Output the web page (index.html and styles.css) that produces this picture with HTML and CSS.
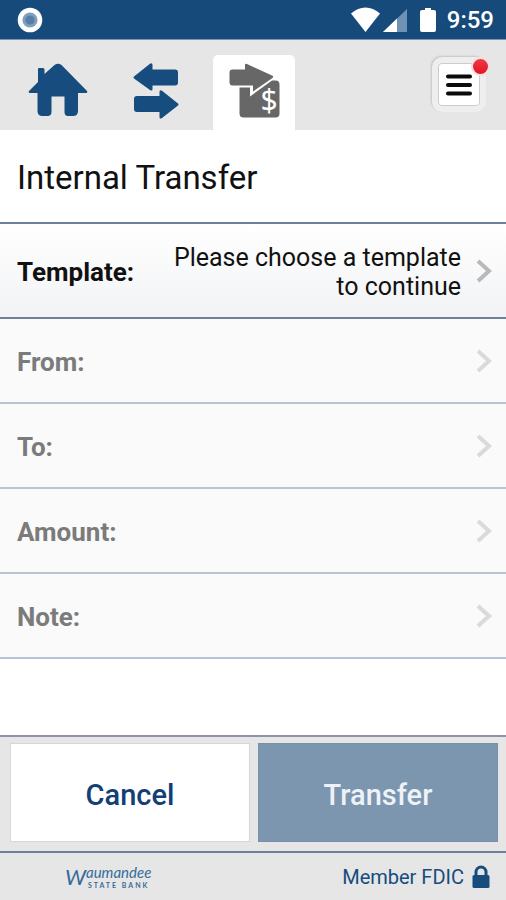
FILE: index.html
```html
<!DOCTYPE html>
<html lang="en">
<head>
<meta charset="utf-8">
<meta name="viewport" content="width=device-width, initial-scale=1">
<title>Internal Transfer</title>
<link rel="stylesheet" href="styles.css">
</head>
<body>
<div class="status">
  <svg class="status-dot" width="26" height="26" viewBox="0 0 26 26" aria-hidden="true"><circle cx="13" cy="13" r="12.3" fill="#fff"/><circle cx="13" cy="13" r="7.6" fill="#7f9fbf"/><circle cx="13" cy="13" r="4.6" fill="#557fa8"/></svg>
  <div class="status-icons">
    <svg width="86" height="26" viewBox="0 0 86 26" aria-hidden="true">
      <path d="M1 6.5C10-1.500 21-1.500 30 6.500L15.500 25Z" fill="#fff"/>
      <path d="M57 2V25H33Z" fill="#6f91b3"/>
      <path d="M47 11.500V25H33Z" fill="#fff"/>
      <path d="M72 3h3V1h6v2h3q2 0 2 2v18q0 2-2 2H72q-2 0-2-2V5q0-2 2-2Z" fill="#fff"/>
    </svg>
    <span>9:59</span>
  </div>
</div>
<nav class="nav">
  <a class="tab" href="#home" aria-label="Home">
    <svg width="60" height="54" viewBox="0 0 60 54" aria-hidden="true"><path d="M11 5h4q1.500 0 1.500 1.500V11L26.500 2q3.500-2.500 7 0L59 28q1 2-1 2h-8v18q0 5-5 5h-5q-3.500 0-3.500-4V33.500h-13V49q0 4-4 4h-5q-5 0-5-5V30H2q-2 0-1-2l9-9V6q0-1 1-1Z" fill="#164c7e"/></svg>
  </a>
  <a class="tab" href="#transfers" aria-label="Transfers">
    <svg width="46" height="56" viewBox="0 0 46 56" aria-hidden="true"><path d="M1 13.500 17 .8Q19.500-.5 19.500 2V6.500H42q3 0 3 3v10q0 3-3 3H19.500V26q0 2.500-2.500 1L1 15.500q-1-1 0-2Z" fill="#164c7e"/><path d="M45 40.500 29 27.800q-2.500-1.300-2.500 1.200V33H4q-3 0-3 3v10q0 3 3 3H26.500v5q0 2.500 2.500 1L45 42.500q1-1 0-2Z" fill="#164c7e"/></svg>
  </a>
  <a class="tab tab-active" href="#internal" aria-label="Internal transfer" aria-current="page">
    <svg width="52" height="56" viewBox="0 0 52 56" aria-hidden="true"><path d="M11.500 24.500H22V33.500L44 17.500H47.500q4 0 4 4V50.500q0 4-4 4H15.500q-4 0-4-4Z" fill="#676767"/><path d="M4.500 6.500H17V2q0-2 2-1L44 12.500q2 1 .5 2.500L25 28.500V22.500H4.500q-3 0-3-3v-10q0-3 3-3Z" fill="#676767"/><text class="coin" x="41" y="48" text-anchor="middle">$</text></svg>
  </a>
  <button class="menu" aria-label="Menu">
    <svg width="28" height="24" viewBox="0 0 28 24" stroke="#0b0b0b" stroke-width="4" stroke-linecap="round" aria-hidden="true"><path d="M3 3.500h22M3 12h22M3 20.500h22"/></svg>
    <span class="badge"></span>
  </button>
</nav>
<main>
  <h1>Internal Transfer</h1>
  <button class="row row-active"><strong>Template:</strong><span class="value">Please choose a template to continue</span><svg class="chevron" width="16" height="24" viewBox="0 0 16 24" aria-hidden="true"><path d="M2 2 13 12 2 22"/></svg></button>
  <button class="row" disabled><strong>From:</strong><svg class="chevron" width="16" height="24" viewBox="0 0 16 24" aria-hidden="true"><path d="M2 2 13 12 2 22"/></svg></button>
  <button class="row" disabled><strong>To:</strong><svg class="chevron" width="16" height="24" viewBox="0 0 16 24" aria-hidden="true"><path d="M2 2 13 12 2 22"/></svg></button>
  <button class="row" disabled><strong>Amount:</strong><svg class="chevron" width="16" height="24" viewBox="0 0 16 24" aria-hidden="true"><path d="M2 2 13 12 2 22"/></svg></button>
  <button class="row" disabled><strong>Note:</strong><svg class="chevron" width="16" height="24" viewBox="0 0 16 24" aria-hidden="true"><path d="M2 2 13 12 2 22"/></svg></button>
</main>
<div class="actions">
  <button class="action cancel">Cancel</button>
  <button class="action transfer">Transfer</button>
</div>
<footer>
  <div class="brand"><span class="brand-initial">W</span><div class="brand-rest"><span class="brand-name">aumandee</span><span class="brand-sub">STATE BANK</span></div></div>
  <div class="fdic">Member FDIC <svg width="18" height="24" viewBox="0 0 18 24" aria-hidden="true"><path d="M4 12V7a5 5 0 0 1 10 0V12" fill="none" stroke="#164c7e" stroke-width="3"/><rect x="0.500" y="10" width="17" height="13" rx="1.500" fill="#164c7e"/></svg></div>
</footer>
</body>
</html>
```
FILE: styles.css
```css
* { box-sizing: border-box; }

body {
  margin: 0;
  min-height: 100vh;
  display: flex;
  flex-direction: column;
  background: #fff;
  color: #111;
  font-family: Roboto, sans-serif;
}

button { font-family: inherit; }
svg { display: block; flex: none; }

.status {
  display: flex;
  justify-content: space-between;
  align-items: center;
  height: 40px;
  padding: 0 12px 0 17px;
  background: #164a7a;
  border-bottom: 1px solid #7896b4;
}

.status-icons {
  display: flex;
  align-items: center;
  gap: 11px;
  color: #fff;
  font-size: 24px;
  font-weight: 500;
  line-height: 28px;
}

.nav {
  display: flex;
  align-items: flex-end;
  height: 90px;
  padding: 0 20px 0 17px;
  background: #e6e6e6;
}

.tab {
  display: flex;
  justify-content: center;
  width: 82px;
  height: 75px;
  padding-top: 8px;
  border-radius: 5px 5px 0 0;
}

.tab + .tab { margin-left: 16px; }
.tab-active { background: #fff; }

.coin {
  fill: #fff;
  font-family: "Noto Sans", sans-serif;
  font-size: 30px;
}

.menu {
  position: relative;
  display: flex;
  align-items: center;
  justify-content: center;
  width: 54px;
  height: 55px;
  margin: 0 0 18px auto;
  padding: 0;
  background: #fff;
  border: 6px solid #eee;
  border-radius: 10px;
  box-shadow: inset 0 0 0 1px #ccc, -1px -1px 2px #c4c4c4;
}

.menu svg { margin-left: -6px; margin-right: -6px; }

.badge {
  position: absolute;
  top: -6px;
  right: -10px;
  width: 19px;
  height: 19px;
  border: 2px solid #f7dfe0;
  border-radius: 50%;
  background: linear-gradient(#ee3a47, #e01525);
}

main { flex: 1; }

h1 {
  margin: 0;
  padding: 30px 17px 26px;
  border-bottom: 2px solid #6c7f9f;
  font-size: 33px;
  font-weight: 400;
  line-height: 36px;
}

.row {
  display: flex;
  align-items: center;
  justify-content: space-between;
  width: 100%;
  min-height: 85px;
  padding: 0 14px 0 17px;
  background: #fafafa;
  border: 0;
  border-bottom: 2px solid #b4c5d5;
  color: #7b7b7b;
  font-size: 25px;
  line-height: 29px;
}

.row-active {
  min-height: 95px;
  background: linear-gradient(#fff, #f2f3f5);
  border-color: #6c7f9f;
  color: #111;
}

.row strong {
  padding-top: 4px;
  font-size: 26px;
  font-weight: 700;
}

.value {
  flex: 1;
  max-width: 300px;
  margin: 0 15px 0 auto;
  padding-top: 2px;
  text-align: right;
}

.chevron {
  fill: none;
  stroke: #dadada;
  stroke-width: 4;
}

.row-active .chevron { stroke: #b9b9b9; }

.actions {
  display: flex;
  gap: 8px;
  padding: 6px 8px 9px 10px;
  background: #e6e6e6;
  border-top: 2px solid #8e93a9;
}

.action {
  flex: 1;
  height: 99px;
  padding: 4px 0 0;
  border: 1px solid #d4d6d8;
  font-size: 29px;
  font-weight: 500;
}

.cancel {
  background: #fff;
  color: #123f75;
}

.transfer {
  background: #7c96b0;
  border-color: #7891aa;
  color: #edf2f7;
}

footer {
  display: flex;
  align-items: center;
  justify-content: space-between;
  height: 49px;
  padding: 0 16px 0 65px;
  background: #e6e6e6;
  border-top: 2px solid #6c7f9f;
  color: #164c7e;
}

.brand {
  display: flex;
  align-items: center;
  color: #356c9b;
  font-family: Lato, sans-serif;
  font-style: italic;
}

.brand-initial {
  font-size: 22px;
  line-height: 28px;
}

.brand-rest {
  display: flex;
  flex-direction: column;
  align-items: center;
}

.brand-name {
  font-size: 15px;
  line-height: 18px;
}

.brand-sub {
  font-size: 7px;
  font-style: normal;
  font-weight: 700;
  line-height: 9px;
  letter-spacing: 2px;
}

.fdic {
  display: flex;
  align-items: center;
  gap: 8px;
  font-size: 20px;
  line-height: 24px;
}
```
